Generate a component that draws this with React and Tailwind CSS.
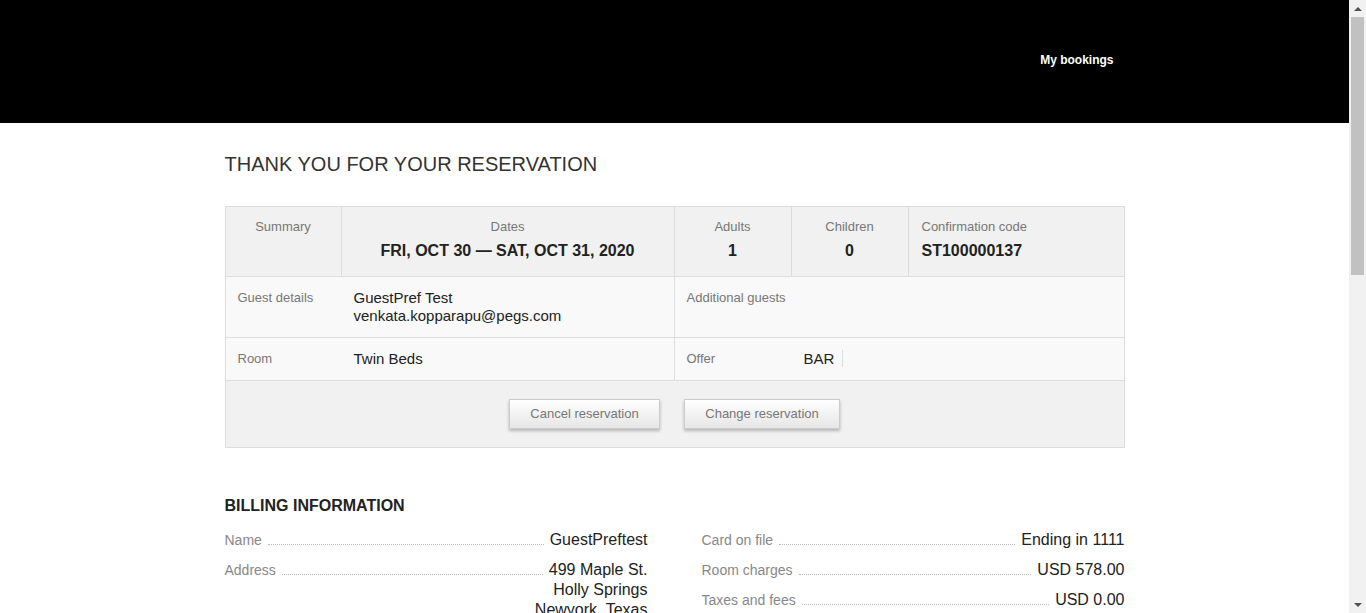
import React from "react";

const font = { fontFamily: '"Liberation Sans", Arial, sans-serif' };

function SummaryCell({ label, value, align = "center", border = true }) {
  return (
    <div
      className={`pt-[10px] pb-[14px] px-[13px] ${border ? "border-l border-[#dddddd]" : ""} ${
        align === "center" ? "text-center" : "text-left"
      }`}
    >
      <div className="text-[13px] leading-[20px] text-[#777777]">{label}</div>
      {value && (
        <div className="mt-[3px] text-[16px] leading-[22px] font-bold text-[#222222]">{value}</div>
      )}
    </div>
  );
}

function DetailRow({ label, labelWidth = "w-[116px]", children }) {
  return (
    <div className="flex py-[12px] px-[12px]">
      <div className={`${labelWidth} shrink-0 text-[13px] leading-[18px] text-[#777777]`}>{label}</div>
      <div className="text-[15px] leading-[18px] text-[#222222]">{children}</div>
    </div>
  );
}

function BillingRow({ label, lines }) {
  const [first, ...rest] = lines;
  return (
    <div className="mb-[10px]">
      <div className="flex items-start">
        <div className="text-[14px] leading-[20px] text-[#888888] shrink-0">{label}</div>
        <div className="flex-1 h-[15px] mx-[6px] border-b border-dotted border-[#bbbbbb]" />
        <div className="text-[16px] leading-[20px] text-[#222222] shrink-0">{first}</div>
      </div>
      {rest.length > 0 && (
        <div className="text-right text-[16px] leading-[20px] text-[#222222]">
          {rest.map((l, i) => (
            <div key={i}>{l}</div>
          ))}
        </div>
      )}
    </div>
  );
}

function Scrollbar() {
  return (
    <div className="w-[17px] h-full bg-[#f1f1f1] flex flex-col items-center shrink-0">
      <div className="h-[17px] w-full flex items-center justify-center">
        <div className="w-0 h-0 border-l-[4px] border-r-[4px] border-b-[4px] border-l-transparent border-r-transparent border-b-[#505050]" />
      </div>
      <div className="w-[13px] h-[258px] bg-[#c1c1c1]" />
      <div className="flex-1" />
      <div className="h-[17px] w-full flex items-center justify-center">
        <div className="w-0 h-0 border-l-[4px] border-r-[4px] border-t-[4px] border-l-transparent border-r-transparent border-t-[#505050]" />
      </div>
    </div>
  );
}

export default function App() {
  return (
    <div className="flex h-screen overflow-hidden bg-white" style={font}>
      <div className="flex-1 overflow-hidden">
        <header className="h-[123px] bg-black">
          <div className="w-[900px] mx-auto flex justify-end pt-[52px] pr-[11px]">
            <a className="text-white text-[12px] leading-[16px] font-bold">My bookings</a>
          </div>
        </header>

        <main className="w-[900px] mx-auto pb-[60px]">
          <h1 className="mt-[29px] text-[20px] leading-[24px] text-[#333333] font-normal">
            THANK YOU FOR YOUR RESERVATION
          </h1>

          <div className="mt-[30px] border border-[#dddddd]">
            <div className="grid grid-cols-[115px_333px_117px_117px_1fr] bg-[#f1f1f1]">
              <SummaryCell label="Summary" border={false} />
              <SummaryCell label="Dates" value="FRI, OCT 30 — SAT, OCT 31, 2020" />
              <SummaryCell label="Adults" value="1" />
              <SummaryCell label="Children" value="0" />
              <SummaryCell label="Confirmation code" value="ST100000137" align="left" />
            </div>

            <div className="grid grid-cols-[448px_1fr] bg-[#f9f9f9] border-t border-[#dddddd]">
              <DetailRow label="Guest details">
                <div>GuestPref Test</div>
                <div>venkata.kopparapu@pegs.com</div>
              </DetailRow>
              <div className="border-l border-[#dddddd]">
                <DetailRow label="Additional guests" labelWidth="w-[117px]" />
              </div>
            </div>

            <div className="grid grid-cols-[448px_1fr] bg-[#f9f9f9] border-t border-[#dddddd]">
              <DetailRow label="Room">Twin Beds</DetailRow>
              <div className="border-l border-[#dddddd]">
                <DetailRow label="Offer" labelWidth="w-[117px]">
                  <span className="pr-[8px] border-r border-[#dddddd]">BAR</span>
                </DetailRow>
              </div>
            </div>

            <div className="flex justify-center gap-[24px] py-[18px] bg-[#f1f1f1] border-t border-[#dddddd]">
              <button className="w-[151px] h-[30px] border border-[#cccccc] bg-gradient-to-b from-white to-[#e6e6e6] shadow-[0_2px_3px_rgba(0,0,0,0.25)] text-[13px] text-[#777777]">
                Cancel reservation
              </button>
              <button className="w-[156px] h-[30px] border border-[#cccccc] bg-gradient-to-b from-white to-[#e6e6e6] shadow-[0_2px_3px_rgba(0,0,0,0.25)] text-[13px] text-[#777777]">
                Change reservation
              </button>
            </div>
          </div>

          <h2 className="mt-[48px] text-[16px] leading-[20px] font-bold text-[#222222]">
            BILLING INFORMATION
          </h2>

          <div className="mt-[14px] grid grid-cols-2 gap-x-[54px]">
            <div>
              <BillingRow label="Name" lines={["GuestPreftest"]} />
              <BillingRow label="Address" lines={["499 Maple St.", "Holly Springs", "Newyork, Texas"]} />
            </div>
            <div>
              <BillingRow label="Card on file" lines={["Ending in 1111"]} />
              <BillingRow label="Room charges" lines={["USD 578.00"]} />
              <BillingRow label="Taxes and fees" lines={["USD 0.00"]} />
            </div>
          </div>
        </main>
      </div>
      <Scrollbar />
    </div>
  );
}
